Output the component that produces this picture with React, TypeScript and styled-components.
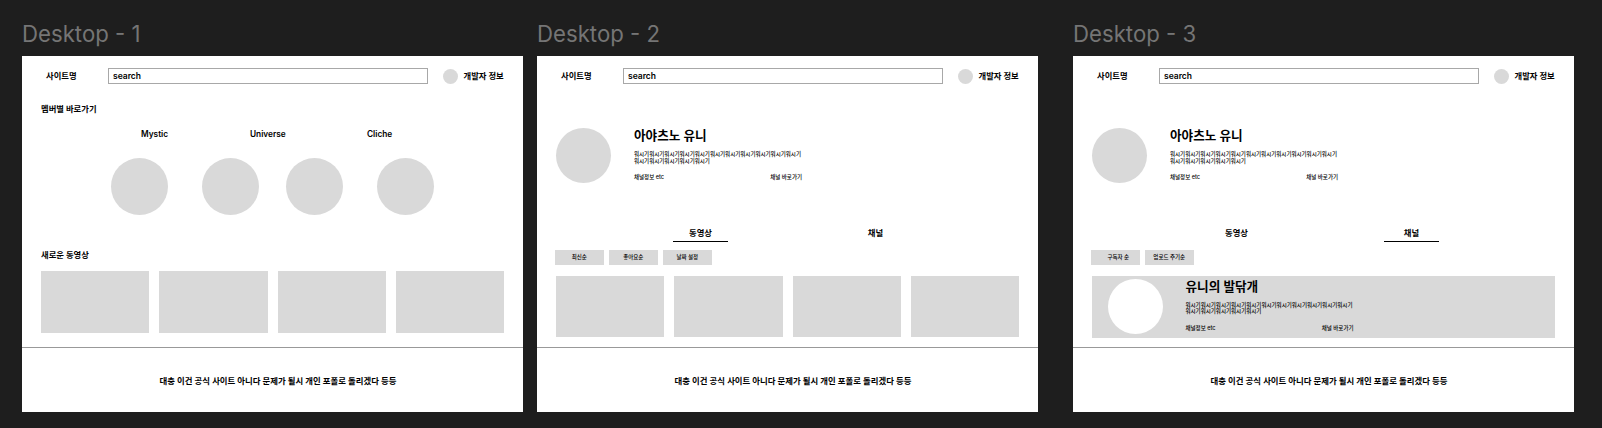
import React from "react";
import styled, { createGlobalStyle } from "styled-components";

const GlobalStyles = createGlobalStyle`
  html, body {
    margin: 0;
    padding: 0;
    background: #1e1e1e;
  }
  body {
    font-family: Inter, "Noto Sans CJK KR", "Noto Sans", sans-serif;
    color: #000;
  }
`;

const Canvas = styled.div`
  width: 1602px;
  height: 428px;
  box-sizing: border-box;
  padding-left: 22px;
  display: grid;
  grid-template-columns: 515px 536px 501px;
  background: #1e1e1e;
  overflow: hidden;
`;

const FrameColumn = styled.section`
  display: flex;
  flex-direction: column;
`;

const FrameTitle = styled.h2`
  margin: 0;
  height: 56px;
  box-sizing: border-box;
  padding-top: 20px;
  font-size: 22.2px;
  line-height: 27px;
  font-weight: 400;
  color: #757575;
`;

const Artboard = styled.div`
  width: 501px;
  height: 356px;
  display: flex;
  flex-direction: column;
  background: #fff;
`;

const Main = styled.main`
  height: 291px;
  display: flex;
  flex-direction: column;
`;

const Header = styled.header`
  height: 28px;
  box-sizing: border-box;
  padding: 12px 0 0 24px;
  display: flex;
  align-items: center;
`;

const SiteName = styled.div`
  width: 62px;
  font-size: 8.3px;
  line-height: 10px;
  font-weight: 600;
`;

const SearchBox = styled.input`
  width: 320px;
  height: 16px;
  box-sizing: border-box;
  margin: 0 15px 0 0;
  padding: 0 4px;
  border: 1px solid #a8a8a8;
  border-radius: 0;
  outline: none;
  background: #fff;
  font-family: inherit;
  font-size: 8.5px;
  font-weight: 600;
  color: #000;
`;

const DevAvatar = styled.div`
  width: 15px;
  height: 15px;
  margin-right: 5.5px;
  border-radius: 50%;
  background: #d9d9d9;
`;

const DevLabel = styled.div`
  font-size: 8.3px;
  line-height: 10px;
  font-weight: 600;
  white-space: nowrap;
`;

const SectionTitle = styled.h3<{ $top: number }>`
  margin: ${({ $top }) => $top}px 0 0 19px;
  font-size: 8.3px;
  line-height: 10px;
  font-weight: 600;
`;

const MemberLabels = styled.div`
  margin-top: 15px;
  padding-left: 119px;
  display: grid;
  grid-template-columns: 109px 117px auto;
  font-size: 8.3px;
  line-height: 10px;
  font-weight: 600;
`;

const MemberCircles = styled.div`
  margin-top: 19px;
  padding-left: 89px;
  display: grid;
  grid-template-columns: 91px 84px 91px 57px;
`;

const Circle = styled.div<{ $size: number; $light?: boolean }>`
  width: ${({ $size }) => $size}px;
  height: ${({ $size }) => $size}px;
  flex-shrink: 0;
  border-radius: 50%;
  background: ${({ $light }) => ($light ? "#fff" : "#d9d9d9")};
`;

const ThumbGrid = styled.div<{ $height: number }>`
  margin: 11px 0 0 19px;
  width: 463px;
  height: ${({ $height }) => $height}px;
  display: grid;
  grid-template-columns: repeat(4, 1fr);
  gap: 10px;
`;

const Thumb = styled.div`
  background: #d9d9d9;
`;

const Profile = styled.div`
  margin: 44px 0 45px 19px;
  display: flex;
  gap: 23px;
`;

const Info = styled.div`
  width: 168px;
  display: flex;
  flex-direction: column;
`;

const InfoName = styled.div`
  font-size: 12.6px;
  line-height: 16px;
  font-weight: 600;
  white-space: nowrap;
`;

const InfoText = styled.p`
  margin: 7px 0 10px;
  font-size: 5.5px;
  line-height: 6.7px;
  font-weight: 500;
  word-break: break-all;
`;

const InfoMeta = styled.div`
  display: flex;
  justify-content: space-between;
  font-size: 5.5px;
  line-height: 6px;
  font-weight: 500;
`;

const Tabs = styled.nav`
  padding-left: 136px;
  display: flex;
  gap: 120px;
`;

const Tab = styled.div<{ $active?: boolean }>`
  width: 55px;
  padding-bottom: 3px;
  border-bottom: 1.5px solid ${({ $active }) => ($active ? "#000" : "transparent")};
  text-align: center;
  font-size: 8.3px;
  line-height: 10px;
  font-weight: 600;
`;

const Filters = styled.div`
  margin: 7.5px 0 0 17.5px;
  display: flex;
  gap: 4.5px;
`;

const FilterButton = styled.button<{ $indent?: number }>`
  width: 49.5px;
  height: 15px;
  padding: 0 0 0 ${({ $indent }) => $indent ?? 0}px;
  border: none;
  background: #d9d9d9;
  font-family: inherit;
  font-size: 5.5px;
  font-weight: 500;
  color: #000;
`;

const ChannelCard = styled.div`
  margin: 11px 0 0 19px;
  width: 463px;
  height: 62px;
  box-sizing: border-box;
  padding: 3px 0 0 15.5px;
  display: flex;
  gap: 23px;
  background: #d9d9d9;
`;

const Footer = styled.footer`
  height: 65px;
  box-sizing: border-box;
  border-top: 1px solid #999;
  display: flex;
  align-items: center;
  justify-content: center;
  padding-left: 11px;
  font-size: 8.4px;
  font-weight: 600;
`;

const FOOTER_TEXT = "대충 이건 공식 사이트 아니다 문제가 될시 개인 포폴로 돌리겠다 등등";
const LOREM = "워시기".repeat(16);

const TopBar = () => (
  <Header>
    <SiteName>사이트명</SiteName>
    <SearchBox defaultValue="search" readOnly />
    <DevAvatar />
    <DevLabel>개발자 정보</DevLabel>
  </Header>
);

const Desc = ({ name }: { name: string }) => (
  <Info>
    <InfoName>{name}</InfoName>
    <InfoText>{LOREM}</InfoText>
    <InfoMeta>
      <span>채널정보 etc</span>
      <span>채널 바로가기</span>
    </InfoMeta>
  </Info>
);

const Thumbs = ({ height }: { height: number }) => (
  <ThumbGrid $height={height}>
    {[0, 1, 2, 3].map((i) => (
      <Thumb key={i} />
    ))}
  </ThumbGrid>
);

const App = () => {
  return (
    <>
      <GlobalStyles />
      <Canvas>
        <FrameColumn>
          <FrameTitle>Desktop - 1</FrameTitle>
          <Artboard>
            <Main>
              <TopBar />
              <SectionTitle $top={20}>멤버별 바로가기</SectionTitle>
              <MemberLabels>
                <span>Mystic</span>
                <span>Universe</span>
                <span>Cliche</span>
              </MemberLabels>
              <MemberCircles>
                {[0, 1, 2, 3].map((i) => (
                  <Circle key={i} $size={57} />
                ))}
              </MemberCircles>
              <SectionTitle $top={35}>새로운 동영상</SectionTitle>
              <Thumbs height={62} />
            </Main>
            <Footer>{FOOTER_TEXT}</Footer>
          </Artboard>
        </FrameColumn>

        <FrameColumn>
          <FrameTitle>Desktop - 2</FrameTitle>
          <Artboard>
            <Main>
              <TopBar />
              <Profile>
                <Circle $size={55} />
                <Desc name="아야츠노 유니" />
              </Profile>
              <Tabs>
                <Tab $active>동영상</Tab>
                <Tab>채널</Tab>
              </Tabs>
              <Filters>
                <FilterButton>최신순</FilterButton>
                <FilterButton>좋아요순</FilterButton>
                <FilterButton>날짜 설정</FilterButton>
              </Filters>
              <Thumbs height={61} />
            </Main>
            <Footer>{FOOTER_TEXT}</Footer>
          </Artboard>
        </FrameColumn>

        <FrameColumn>
          <FrameTitle>Desktop - 3</FrameTitle>
          <Artboard>
            <Main>
              <TopBar />
              <Profile>
                <Circle $size={55} />
                <Desc name="아야츠노 유니" />
              </Profile>
              <Tabs>
                <Tab>동영상</Tab>
                <Tab $active>채널</Tab>
              </Tabs>
              <Filters>
                <FilterButton $indent={6}>구독자 순</FilterButton>
                <FilterButton>업로드 주기순</FilterButton>
              </Filters>
              <ChannelCard>
                <Circle $size={55} $light />
                <Desc name="유니의 발닦개" />
              </ChannelCard>
            </Main>
            <Footer>{FOOTER_TEXT}</Footer>
          </Artboard>
        </FrameColumn>
      </Canvas>
    </>
  );
};

export default App;
